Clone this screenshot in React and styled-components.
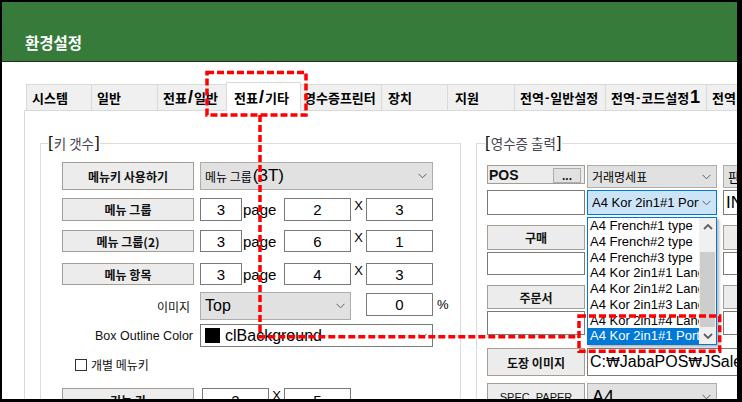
import React from 'react';
import styled, { createGlobalStyle } from 'styled-components';

const KR = `"Noto Sans CJK KR", "Liberation Sans", sans-serif`;
const LAT = `"Liberation Sans", "Noto Sans CJK KR", sans-serif`;
const PATH = `"Liberation Sans", "DejaVu Sans", "Noto Sans CJK KR", sans-serif`;

const GlobalStyle = createGlobalStyle`
  html, body { margin: 0; padding: 0; background: #fff; }
  body { font-family: ${LAT}; }
  * { box-sizing: border-box; }
`;

const Window = styled.div`
  position: relative;
  width: 742px;
  height: 402px;
  border-style: solid;
  border-color: #000;
  border-width: 2px 5px 3px 2px;
  overflow: hidden;
  background: #fff;
  display: flex;
  flex-direction: column;
`;

const Header = styled.header`
  flex: none;
  height: 60px;
  background: #367b39;
  border-bottom: 1px solid #1d2b1d;
  padding: 20px 0 0 23px;
  display: flex;
  align-items: center;
`;

const Title = styled.h1`
  margin: 0;
  font: bold 15.5px ${KR};
  color: #fff;
`;

const Body = styled.div`
  flex: 1;
  min-height: 0;
  display: flex;
  flex-direction: column;
  padding: 20px 0 0 22px;
`;

const TabStrip = styled.div`
  flex: none;
  height: 28px;
  display: flex;
  align-items: flex-end;
  padding-left: 2px;
  position: relative;
  z-index: 1;
`;

const Tab = styled.div`
  flex: none;
  width: ${p => p.$w}px;
  height: ${p => (p.$active ? 29 : 26)}px;
  margin-left: ${p => (p.$first ? 0 : -1)}px;
  margin-bottom: ${p => (p.$active ? -1 : 0)}px;
  background: ${p => (p.$active ? '#fff' : '#f0f0f0')};
  border: 1px solid #d9d9d9;
  border-bottom: none;
  padding-left: ${p => p.$pad ?? 5}px;
  display: flex;
  align-items: center;
  font: bold 13px ${KR};
  color: #000;
  white-space: nowrap;
  overflow: hidden;
  position: relative;
  z-index: ${p => (p.$active ? 2 : 1)};
`;

const Big = styled.span`
  font: bold 18px ${LAT};
  margin: 0 1px;
`;

const Dash = styled.span`
  font: bold 13px ${LAT};
  margin: 0 1px;
`;

const Panel = styled.div`
  flex: 1;
  align-self: flex-start;
  width: 740px;
  border-top: 1px solid #d9d9d9;
  border-left: 1px solid #d9d9d9;
  display: flex;
  align-items: flex-start;
  padding: 32px 0 0 15px;
`;

const Group = styled.section`
  position: relative;
  flex: none;
  width: ${p => p.$w}px;
  height: 300px;
  margin-left: ${p => p.$ml || 0}px;
  border: 1px solid #dcdcdc;
  padding: ${p => p.$pad};
`;

const Legend = styled.div`
  position: absolute;
  top: -12px;
  left: ${p => p.$left}px;
  height: 22px;
  background: #fff;
  display: flex;
  align-items: center;
  font: 13.5px ${KR};
  color: #45454f;
`;

const Bracket = styled.span`
  font: 17px ${LAT};
  color: #111;
`;

const LegendText = styled.span`
  margin: 0 1px;
`;

const Row = styled.div`
  display: flex;
  height: ${p => p.$h}px;
  margin-top: ${p => p.$mt || 0}px;
`;

const Btn = styled.div`
  flex: none;
  width: ${p => p.$w ?? 132}px;
  margin-left: ${p => p.$ml || 0}px;
  background: #ececec;
  border: 1px solid #a69c92;
  display: flex;
  align-items: center;
  justify-content: center;
  font: ${p => (p.$lat ? `11px ${LAT}` : `bold 12px ${KR}`)};
  color: #111;
  white-space: nowrap;
  overflow: hidden;
`;

const ComboBox = styled.div`
  flex: none;
  width: ${p => (p.$w ? `${p.$w}px` : '100%')};
  margin-left: ${p => p.$ml || 0}px;
  background: ${p => (p.$focus ? '#cce4f7' : p.$white ? '#fff' : '#e1e1e1')};
  border: 1px solid ${p => (p.$focus ? '#0078d7' : p.$white ? '#7a7a7a' : '#adadad')};
  display: flex;
  align-items: center;
  padding: 0 5px 0 4px;
  gap: 3px;
  overflow: hidden;
`;

const ComboValue = styled.span`
  flex: 1;
  min-width: 0;
  display: flex;
  align-items: center;
  overflow: hidden;
  white-space: nowrap;
  font-family: ${p => (p.$kr ? KR : LAT)};
  font-size: ${p => p.$size || 13}px;
  color: #000;
`;

const KrSmall = styled.span`
  font: 12px ${KR};
  margin-right: 1px;
`;

const Swatch = styled.span`
  flex: none;
  width: 16px;
  height: 15px;
  background: #000;
  margin: 0 5px 0 -1px;
`;

const Field = styled.div`
  flex: none;
  width: ${p => p.$w}px;
  height: ${p => (p.$h ? `${p.$h}px` : 'auto')};
  align-self: ${p => (p.$h ? 'flex-start' : 'stretch')};
  margin-top: ${p => p.$mt || 0}px;
  margin-left: ${p => p.$ml || 0}px;
  background: #fff;
  border: 1px solid #7a7a7a;
  display: flex;
  align-items: center;
  justify-content: ${p => (p.$left ? 'flex-start' : 'center')};
  padding-left: ${p => (p.$left ? 2 : 0)}px;
  font-family: ${p => (p.$path ? PATH : LAT)};
  font-size: ${p => p.$size || 15}px;
  color: #000;
  white-space: nowrap;
  overflow: hidden;
`;

const Won = styled.span`
  font-family: "DejaVu Sans", "Liberation Sans", sans-serif;
  font-size: 14px;
`;

const Unit = styled.div`
  flex: none;
  width: ${p => p.$w}px;
  padding-left: 1px;
  display: flex;
  align-items: center;
  font: 15px ${LAT};
  color: #000;
`;

const Times = styled.div`
  flex: none;
  width: 15px;
  align-self: flex-start;
  line-height: 16px;
  text-align: center;
  font: 13px ${LAT};
  color: #000;
`;

const Pct = styled.div`
  flex: none;
  margin-left: 4px;
  align-self: flex-start;
  margin-top: 1px;
  height: 23px;
  display: flex;
  align-items: center;
  font: 13px ${LAT};
  color: #000;
`;

const FieldLabel = styled.div`
  flex: none;
  width: 132px;
  padding-right: ${p => p.$pr}px;
  display: flex;
  align-items: center;
  justify-content: flex-end;
  font: ${p => (p.$kr ? `12px ${KR}` : `12.5px ${LAT}`)};
  color: #111;
  white-space: nowrap;
`;

const CheckBox = styled.span`
  flex: none;
  width: 12px;
  height: 12px;
  margin-left: ${p => p.$ml || 0}px;
  border: 1px solid #333;
  background: #fff;
`;

const CheckLabel = styled.span`
  margin-left: 4px;
  font: 12px ${KR};
  line-height: 12px;
  color: #111;
`;

const Spacer = styled.div`
  flex: none;
  width: ${p => p.$w}px;
  margin-left: ${p => p.$ml || 0}px;
`;

const PosBox = styled.div`
  flex: none;
  width: 98px;
  height: 19px;
  align-self: flex-start;
  background: #ececec;
  border: 1px solid #a69c92;
  display: flex;
  align-items: center;
  justify-content: space-between;
  padding: 0 3px 0 1px;
`;

const PosText = styled.span`
  font: bold 14px ${LAT};
  color: #111;
`;

const DotBtn = styled.span`
  width: 28px;
  height: 15px;
  margin-top: 2px;
  background: #e1e1e1;
  border: 1px solid #adadad;
  display: flex;
  align-items: flex-end;
  justify-content: center;
  font: bold 12px ${LAT};
  line-height: 12px;
  color: #111;
`;

const DropAnchor = styled.div`
  position: relative;
  flex: none;
  width: ${p => p.$w}px;
  margin-left: ${p => p.$ml || 0}px;
  display: flex;
`;

const DropList = styled.div`
  position: absolute;
  top: 27px;
  left: 0;
  width: 130px;
  height: 128px;
  background: #fff;
  border: 1px solid #0078d7;
  box-shadow: 2px 2px 3px rgba(0, 0, 0, 0.3);
  display: flex;
  z-index: 5;
`;

const Items = styled.div`
  flex: 1;
  min-width: 0;
  overflow: hidden;
`;

const Item = styled.div`
  height: 15.75px;
  line-height: 15px;
  padding-left: 2px;
  font: 13px ${LAT};
  white-space: nowrap;
  overflow: hidden;
  background: ${p => (p.$sel ? '#0078d7' : 'transparent')};
  color: ${p => (p.$sel ? '#fff' : '#000')};
`;

const ScrollBar = styled.div`
  flex: none;
  width: 17px;
  background: #f0f0f0;
  display: flex;
  flex-direction: column;
`;

const ScrollArrow = styled.div`
  flex: none;
  height: 17px;
  display: flex;
  align-items: center;
  justify-content: center;
`;

const ScrollTrack = styled.div`
  flex: 1;
  padding: 17px 1px 0;
  display: flex;
  flex-direction: column;
`;

const Thumb = styled.div`
  flex: 1;
  background: #cdcdcd;
`;

const Overlay = styled.svg`
  position: absolute;
  left: -2px;
  top: -2px;
  pointer-events: none;
  z-index: 10;
`;

const Chevron = () => (
  <svg width="9" height="6" viewBox="0 0 9 6" style={{ flex: 'none' }}>
    <polyline points="0.5,0.8 4.5,4.8 8.5,0.8" fill="none" stroke="#606060" strokeWidth="1" />
  </svg>
);

const ScrollChevron = ({ up }) => (
  <svg width="10" height="6" viewBox="0 0 10 6">
    <polyline
      points={up ? '1,5 5,1 9,5' : '1,1 5,5 9,1'}
      fill="none"
      stroke="#606060"
      strokeWidth="1.8"
    />
  </svg>
);

const tabs = [
  { w: 66, label: '시스템' },
  { w: 67, label: '일반' },
  { w: 70, label: <>전표<Big>/</Big>일반</> },
  { w: 75, label: <>전표<Big>/</Big>기타</>, active: true, pad: 7 },
  { w: 82, label: '영수증프린터', pad: 3 },
  { w: 67, label: '장치', pad: 6 },
  { w: 68, label: '지원', pad: 7 },
  { w: 92, label: <>전역<Dash>-</Dash>일반설정</> },
  { w: 102, label: <>전역<Dash>-</Dash>코드설정<Big>1</Big></> },
  { w: 110, label: <>전역<Dash>-</Dash>코드설정<Big>2</Big></> },
];

const listItems = [
  'A4 French#1 type',
  'A4 French#2 type',
  'A4 French#3 type',
  'A4 Kor 2in1#1 Landscape',
  'A4 Kor 2in1#2 Landscape',
  'A4 Kor 2in1#3 Landscape',
  'A4 Kor 2in1#4 Landscape',
  'A4 Kor 2in1#1 Portrait',
];

export default function App() {
  return (
    <>
      <GlobalStyle />
      <Window>
        <Header>
          <Title>환경설정</Title>
        </Header>
        <Body>
          <TabStrip>
            {tabs.map((t, i) => (
              <Tab key={i} $w={t.w} $first={i === 0} $active={t.active} $pad={t.pad}>
                {t.label}
              </Tab>
            ))}
          </TabStrip>
          <Panel>
            <Group $w={421} $pad="18px 0 0 21px">
              <Legend $left={7}>
                <Bracket>[</Bracket>
                <LegendText>키 갯수</LegendText>
                <Bracket>]</Bracket>
              </Legend>
              <Row $h={28}>
                <Btn>메뉴키 사용하기</Btn>
                <ComboBox $w={233} $ml={6}>
                  <ComboValue $size={17}>
                    <KrSmall>메뉴 그룹</KrSmall>(3T)
                  </ComboValue>
                  <Chevron />
                </ComboBox>
              </Row>
              <Row $h={23} $mt={8}>
                <Btn>메뉴 그룹</Btn>
                <Field $w={42} $ml={6}>3</Field>
                <Unit $w={42}>page</Unit>
                <Field $w={67}>2</Field>
                <Times>X</Times>
                <Field $w={67}>3</Field>
              </Row>
              <Row $h={22} $mt={9}>
                <Btn>메뉴 그룹(2)</Btn>
                <Field $w={42} $ml={6}>3</Field>
                <Unit $w={42}>page</Unit>
                <Field $w={67}>6</Field>
                <Times>X</Times>
                <Field $w={67}>1</Field>
              </Row>
              <Row $h={22} $mt={11}>
                <Btn>메뉴 항목</Btn>
                <Field $w={42} $ml={6}>3</Field>
                <Unit $w={42}>page</Unit>
                <Field $w={67}>4</Field>
                <Times>X</Times>
                <Field $w={67}>3</Field>
              </Row>
              <Row $h={28} $mt={7}>
                <FieldLabel $kr $pr={4}>이미지</FieldLabel>
                <ComboBox $w={151} $ml={6}>
                  <ComboValue $size={16}>Top</ComboValue>
                  <Chevron />
                </ComboBox>
                <Field $w={67} $ml={15} $h={23} $mt={1}>0</Field>
                <Pct>%</Pct>
              </Row>
              <Row $h={23} $mt={4}>
                <FieldLabel $pr={1}>Box Outline Color</FieldLabel>
                <ComboBox $w={233} $ml={6} $white>
                  <ComboValue $size={16}>
                    <Swatch />
                    clBackground
                  </ComboValue>
                  <Chevron />
                </ComboBox>
              </Row>
              <Row $h={12} $mt={12}>
                <CheckBox $ml={13} />
                <CheckLabel>개별 메뉴키</CheckLabel>
              </Row>
              <Row $h={24} $mt={17}>
                <Btn>기능 키</Btn>
                <Field $w={67} $ml={8}>2</Field>
                <Times>X</Times>
                <Field $w={67}>5</Field>
              </Row>
            </Group>

            <Group $w={300} $ml={15} $pad="21px 0 0 10px">
              <Legend $left={8}>
                <Bracket>[</Bracket>
                <LegendText>영수증 출력</LegendText>
                <Bracket>]</Bracket>
              </Legend>
              <Row $h={23}>
                <PosBox>
                  <PosText>POS</PosText>
                  <DotBtn>...</DotBtn>
                </PosBox>
                <ComboBox $w={130} $ml={2}>
                  <ComboValue $kr $size={12}>거래명세표</ComboValue>
                  <Chevron />
                </ComboBox>
                <ComboBox $w={100} $ml={6}>
                  <ComboValue $kr $size={13}>판매</ComboValue>
                  <Chevron />
                </ComboBox>
              </Row>
              <Row $h={25} $mt={2}>
                <Field $w={98} />
                <DropAnchor $w={130} $ml={2}>
                  <ComboBox $focus>
                    <ComboValue $size={13}>A4 Kor 2in1#1 Portrait</ComboValue>
                    <Chevron />
                  </ComboBox>
                  <DropList>
                    <Items>
                      {listItems.map((t, i) => (
                        <Item key={i} $sel={i === listItems.length - 1}>
                          {t}
                        </Item>
                      ))}
                    </Items>
                    <ScrollBar>
                      <ScrollArrow>
                        <ScrollChevron up />
                      </ScrollArrow>
                      <ScrollTrack>
                        <Thumb />
                      </ScrollTrack>
                      <ScrollArrow>
                        <ScrollChevron />
                      </ScrollArrow>
                    </ScrollBar>
                  </DropList>
                </DropAnchor>
                <Field $w={100} $ml={6} $left $size={17}>IN</Field>
              </Row>
              <Row $h={25} $mt={10}>
                <Btn $w={98}>구매</Btn>
                <Spacer $w={130} $ml={2} />
                <Btn $w={100} $ml={6} />
              </Row>
              <Row $h={23} $mt={2}>
                <Field $w={98} />
                <Spacer $w={130} $ml={2} />
                <Field $w={100} $ml={6} />
              </Row>
              <Row $h={24} $mt={10}>
                <Btn $w={98}>주문서</Btn>
                <Spacer $w={130} $ml={2} />
                <Btn $w={100} $ml={6} />
              </Row>
              <Row $h={24} $mt={2}>
                <Field $w={98} />
                <Spacer $w={130} $ml={2} />
                <Field $w={100} $ml={6} />
              </Row>
              <Row $h={28} $mt={13}>
                <Btn $w={98}>도장 이미지</Btn>
                <Field $w={200} $ml={2} $left $path $size={16}>
                  C:<Won>₩</Won>JabaPOS<Won>₩</Won>JSale<Won>₩</Won>Stamp.bmp
                </Field>
              </Row>
              <Row $h={28} $mt={7}>
                <Btn $w={98} $lat>SPEC_PAPER</Btn>
                <ComboBox $w={130} $ml={2}>
                  <ComboValue $size={18}>A4</ComboValue>
                  <Chevron />
                </ComboBox>
              </Row>
            </Group>
          </Panel>
        </Body>
        <Overlay width="742" height="402" viewBox="0 0 742 402">
          <g fill="none" stroke="#ff0000" strokeWidth="3.5" strokeDasharray="7 3">
            <rect x="207" y="72.5" width="99" height="42.5" />
            <path d="M260 115 V336.7 H579" />
            <rect x="579" y="316" width="140.7" height="35.3" />
          </g>
        </Overlay>
      </Window>
    </>
  );
}
